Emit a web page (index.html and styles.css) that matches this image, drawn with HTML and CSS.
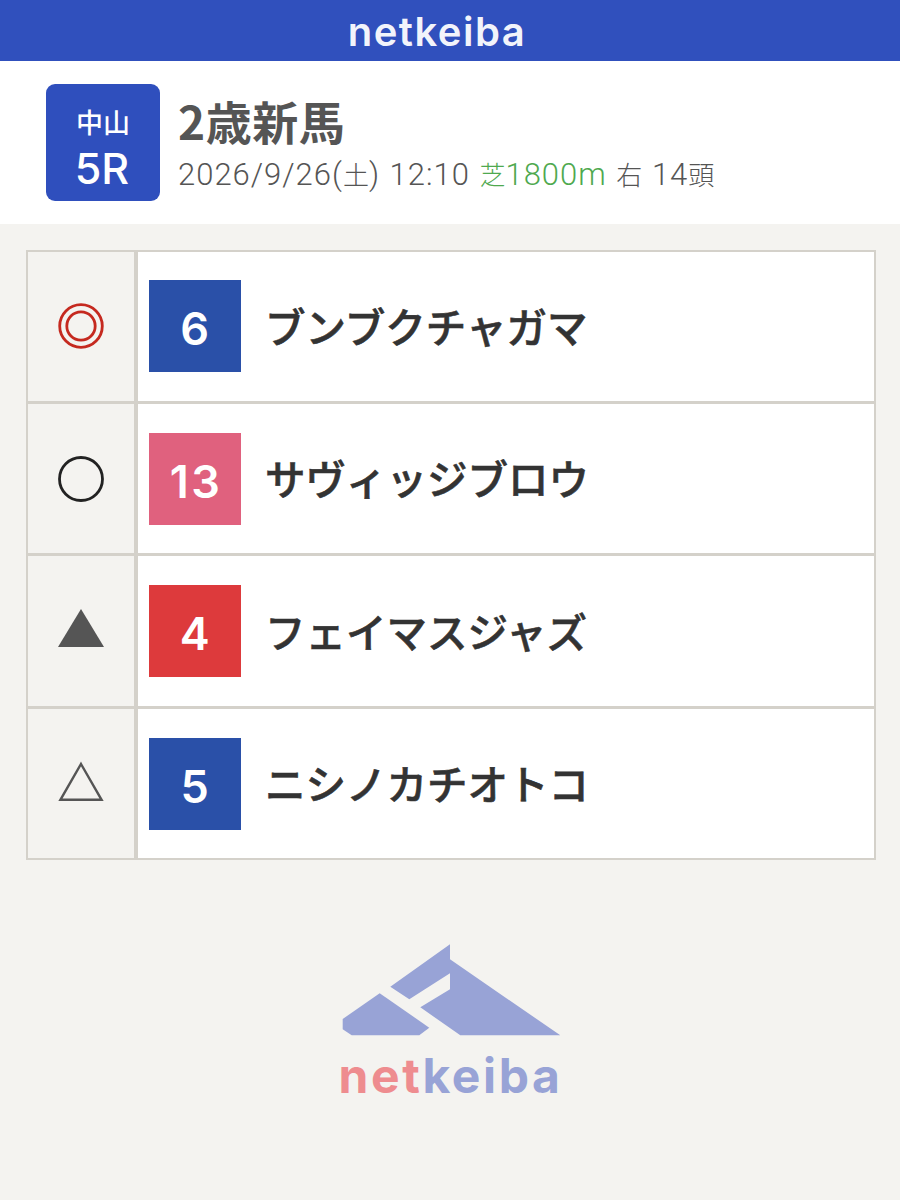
FILE: index.html
```html
<!DOCTYPE html>
<html lang="ja">
<head>
<meta charset="utf-8">
<title>netkeiba</title>
<link rel="stylesheet" href="styles.css">
</head>
<body>
<header class="topbar"><span class="toplogo">netkeiba</span></header>
<section class="race">
  <div class="badge"><span class="place">中山</span><span class="rnum">5R</span></div>
  <div class="info">
    <h1 class="title">2歳新馬</h1>
    <p class="meta">2026/9/26(<span class="cjk">土</span>) 12:10 <span class="turf"><span class="cjk">芝</span>1800m</span> <span class="cjk">右</span> 14<span class="cjk">頭</span></p>
  </div>
</section>
<main class="picks">
  <div class="mark">
    <svg class="icon" viewBox="0 0 46 46"><circle cx="23" cy="23" r="21.3" fill="none" stroke="#c5291f" stroke-width="2.8"/><circle cx="23" cy="23" r="14.2" fill="none" stroke="#c5291f" stroke-width="2.8"/></svg>
  </div>
  <div class="horse"><span class="num blue">6</span><span class="name">ブンブクチャガマ</span></div>
  <div class="mark">
    <svg class="icon" viewBox="0 0 46 46"><circle cx="23" cy="23" r="21.5" fill="none" stroke="#222" stroke-width="2.8"/></svg>
  </div>
  <div class="horse"><span class="num pink">13</span><span class="name">サヴィッジブロウ</span></div>
  <div class="mark">
    <svg class="icon" viewBox="0 0 46 46"><polygon points="23,1 46,39 0,39" fill="#555"/></svg>
  </div>
  <div class="horse"><span class="num red">4</span><span class="name">フェイマスジャズ</span></div>
  <div class="mark">
    <svg class="icon" viewBox="0 0 46 46"><polygon points="23,3 43.6,38.8 2.4,38.8" fill="none" stroke="#555" stroke-width="2.4"/></svg>
  </div>
  <div class="horse"><span class="num blue">5</span><span class="name">ニシノカチオトコ</span></div>
</main>
<footer class="foot">
  <svg class="footmark" viewBox="340 944 220 92"><polygon points="449,944.3 389.3,986.7 408.3,999.3 449,973.3 449,989.3 419.3,1007.3 459.3,1035.3 559.3,1035.3 449,959.3" fill="#98a3d6"/><polygon points="378.7,993.3 428.3,1027.7 418.3,1035.3 350.7,1035.3 341.7,1029.3 341.7,1019" fill="#98a3d6"/></svg>
  <div class="footlogo"><span class="net">net</span><span class="keiba">keiba</span></div>
</footer>
</body>
</html>
```
FILE: styles.css
```css
* { box-sizing: border-box; }
html, body { margin: 0; padding: 0; }
body {
  width: 900px;
  height: 1200px;
  overflow: hidden;
  background: #f4f3f0;
  font-family: "Noto Sans CJK JP", "Noto Sans", sans-serif;
}
.topbar {
  height: 61px;
  background: #3050bd;
  display: flex;
  align-items: center;
  justify-content: center;
}
.toplogo {
  font-family: Inter, sans-serif;
  font-weight: 600;
  font-size: 40px;
  line-height: 1;
  letter-spacing: 1.5px;
  color: #fff;
  opacity: .94;
  margin-right: 26px;
  padding-top: 2px;
}
.race {
  height: 163px;
  background: #fff;
  padding: 23px 0 0 46px;
  display: flex;
  gap: 18px;
}
.badge {
  width: 114px;
  height: 117px;
  border-radius: 9px;
  background: #2f4fbd;
  color: #fff;
  display: flex;
  flex-direction: column;
  align-items: center;
  padding-top: 20px;
}
.place { font-size: 27px; line-height: 36px; font-weight: 500; }
.rnum { font-family: Inter, sans-serif; font-weight: 500; font-size: 43px; line-height: 52px; margin-top: 2px; margin-right: 2px; }
.info { padding-top: 11px; }
.title {
  margin: 0;
  font-size: 46px;
  line-height: 50px;
  font-weight: 700;
  color: #555;
  letter-spacing: .5px;
}
.meta {
  margin: 11px 0 0;
  font-family: Roboto, "Noto Sans CJK JP", sans-serif;
  font-size: 31px;
  line-height: 36px;
  font-weight: 300;
  letter-spacing: 1px;
  word-spacing: 1px;
  color: #555;
  white-space: nowrap;
}
.cjk { font-family: "Noto Sans CJK JP", sans-serif; font-size: 26px; letter-spacing: 0; }
.turf { color: #4fa94f; }
.picks {
  margin: 26px 24px 0 26px;
  padding: 2px;
  background: #d4d1ca;
  display: grid;
  grid-template-columns: 106px 1fr;
  grid-template-rows: 148.9px 149.3px 149.9px 148.9px;
  column-gap: 4px;
  row-gap: 3px;
}
.mark {
  background: #f4f3f0;
  display: flex;
  align-items: center;
  justify-content: center;
}
.icon { width: 46px; height: 46px; display: block; }
.horse {
  background: #fff;
  padding-left: 11px;
  display: flex;
  align-items: center;
  gap: 24px;
}
.num {
  width: 92px;
  height: 92px;
  display: flex;
  align-items: center;
  justify-content: center;
  color: #fff;
  font-family: Inter, sans-serif;
  font-weight: 600;
  font-size: 45px;
  padding: 5px 0 0 2px;
  letter-spacing: 2.5px;
}
.blue { background: #2a50a8; }
.pink { background: #e0617e; }
.red { background: #dd3a3c; }
.name {
  font-size: 40.5px;
  font-weight: 500;
  -webkit-text-stroke: .6px #333;
  color: #333;
  line-height: 1;
  white-space: nowrap;
}
.foot {
  display: flex;
  flex-direction: column;
  align-items: center;
  padding: 84px 0 0 1px;
}
.footmark { width: 220px; height: 92px; display: block; }
.footlogo {
  font-family: Inter, sans-serif;
  font-weight: 700;
  font-size: 48px;
  line-height: 50px;
  letter-spacing: 2.6px;
  margin-top: 15px;
}
.net { color: #ee8c8f; }
.keiba { color: #98a3d6; }
```
